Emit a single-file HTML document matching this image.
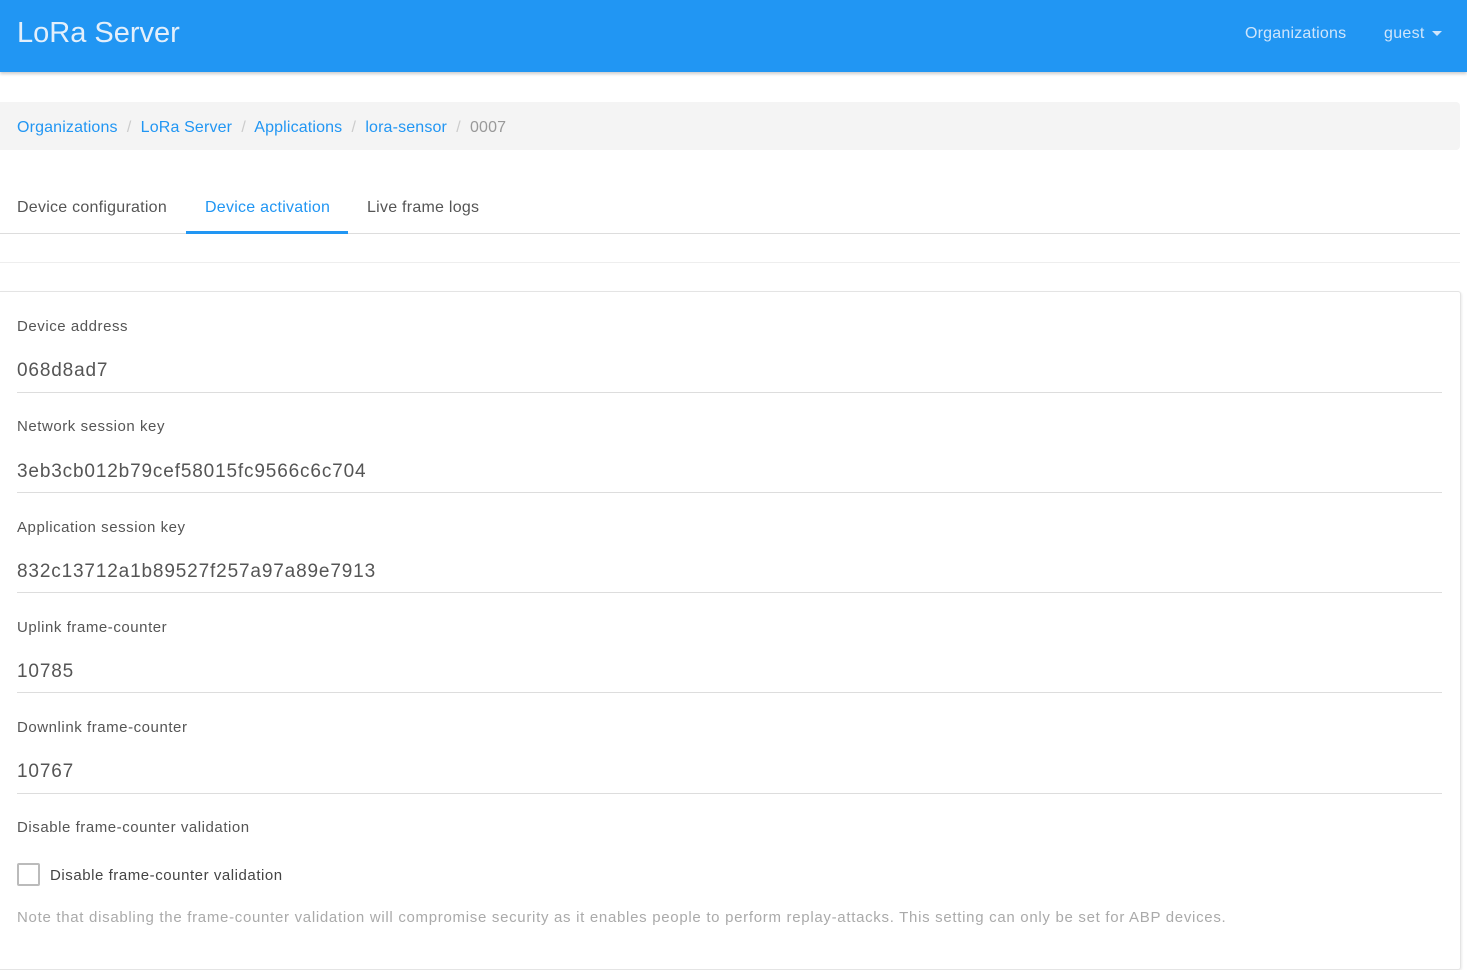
<!DOCTYPE html>
<html><head><style>
body{margin:0;width:1467px;height:969px;overflow:hidden;background:#fff;font-family:"Liberation Sans",sans-serif;position:relative}
.a{position:absolute;white-space:nowrap}
.lbl{font-size:15px;color:#555;letter-spacing:0.55px}
.val{font-size:19px;color:#555;letter-spacing:0.85px}
.ln{position:absolute;left:17px;width:1425px;height:1px;background:#ddd}
</style></head><body>
<div class="a" style="left:0;top:0;width:1467px;height:72px;background:#2196f3;box-shadow:0 2px 3px rgba(0,0,0,.2)"></div>
<div class="a" style="left:17px;top:17px;font-size:29px;color:#e3effb">LoRa Server</div>
<div class="a" style="left:1245px;top:25px;font-size:16px;color:#cfe5fb;letter-spacing:0.2px">Organizations</div>
<div class="a" style="left:1384px;top:25px;font-size:16px;color:#cfe5fb;letter-spacing:0.3px">guest</div>
<div class="a" style="left:1432px;top:31px;width:0;height:0;border-left:5px solid transparent;border-right:5px solid transparent;border-top:5px solid #cfe5fb"></div>
<div class="a" style="left:0;top:102px;width:1460px;height:48px;background:#f4f4f4;border-radius:0 4px 4px 0"></div>
<div class="a" style="left:17px;top:119px;font-size:16px;color:#2196f3;letter-spacing:0.15px">Organizations <span style="color:#ccc">&nbsp;/&nbsp;</span> LoRa Server <span style="color:#ccc">&nbsp;/&nbsp;</span> Applications <span style="color:#ccc">&nbsp;/&nbsp;</span> lora-sensor <span style="color:#ccc">&nbsp;/&nbsp;</span> <span style="color:#999">0007</span></div>
<div class="a" style="left:17px;top:199px;font-size:16px;color:#555;letter-spacing:0.25px">Device configuration</div>
<div class="a" style="left:205px;top:199px;font-size:16px;color:#2196f3;letter-spacing:0.25px">Device activation</div>
<div class="a" style="left:367px;top:199px;font-size:16px;color:#555;letter-spacing:0.25px">Live frame logs</div>
<div class="a" style="left:0;top:233px;width:1460px;height:1px;background:#ddd"></div>
<div class="a" style="left:186px;top:231px;width:162px;height:3px;background:#2196f3"></div>
<div class="a" style="left:0;top:262px;width:1460px;height:1px;background:#eee"></div>
<div class="a" style="left:0;top:291px;width:1460px;height:677px;border:1px solid #e4e4e4;border-left:none;border-radius:0 3px 3px 0;box-shadow:1px 1px 2px rgba(0,0,0,.08)"></div>
<div class="a lbl" style="left:17px;top:318px">Device address</div>
<div class="a val" style="left:17px;top:360px">068d8ad7</div>
<div class="ln" style="top:392px"></div>
<div class="a lbl" style="left:17px;top:418px">Network session key</div>
<div class="a val" style="left:17px;top:461px">3eb3cb012b79cef58015fc9566c6c704</div>
<div class="ln" style="top:492px"></div>
<div class="a lbl" style="left:17px;top:519px">Application session key</div>
<div class="a val" style="left:17px;top:561px">832c13712a1b89527f257a97a89e7913</div>
<div class="ln" style="top:592px"></div>
<div class="a lbl" style="left:17px;top:619px">Uplink frame-counter</div>
<div class="a val" style="left:17px;top:661px">10785</div>
<div class="ln" style="top:692px"></div>
<div class="a lbl" style="left:17px;top:719px">Downlink frame-counter</div>
<div class="a val" style="left:17px;top:761px">10767</div>
<div class="ln" style="top:793px"></div>
<div class="a lbl" style="left:17px;top:819px">Disable frame-counter validation</div>
<div class="a" style="left:17px;top:863px;width:19px;height:19px;border:2px solid #bbb;border-radius:2px"></div>
<div class="a lbl" style="left:50px;top:867px;color:#444">Disable frame-counter validation</div>
<div class="a" style="left:17px;top:909px;font-size:15px;color:#aaa;letter-spacing:0.7px">Note that disabling the frame-counter validation will compromise security as it enables people to perform replay-attacks. This setting can only be set for ABP devices.</div>
</body></html>
